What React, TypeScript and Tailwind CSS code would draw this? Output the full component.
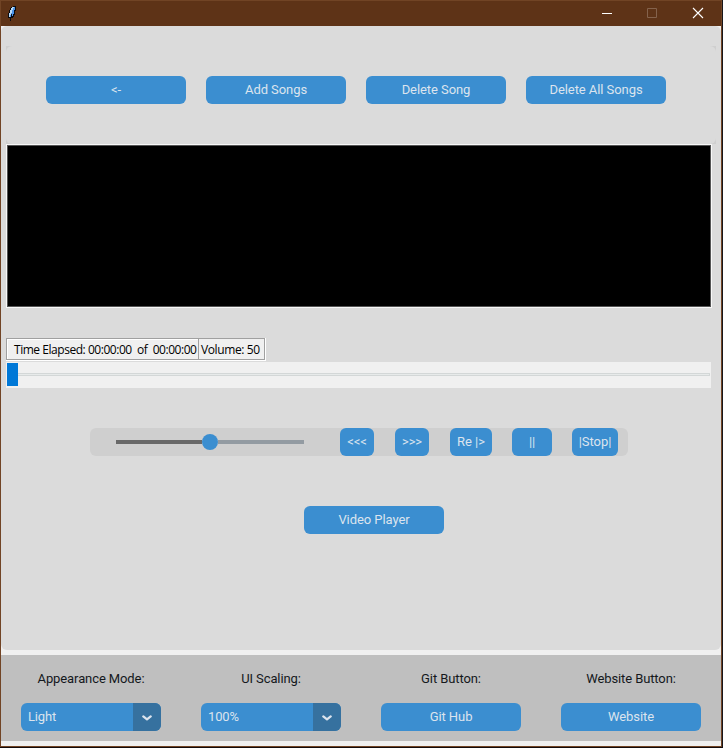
import React from "react";

function Btn({ children, className = "w-[140px]" }: { children: React.ReactNode; className?: string }) {
  return (
    <button
      className={`flex h-7 shrink-0 items-center justify-center whitespace-pre rounded-[6px] bg-[#3b8ed0] pb-[2px] text-[13px] leading-none tracking-[-0.07px] text-[#dce4ee] ${className}`}
    >
      {children}
    </button>
  );
}

function Select({ value }: { value: string }) {
  return (
    <button className="flex h-7 w-[140px] overflow-hidden rounded-[6px] bg-[#3b8ed0] text-[13px] tracking-[-0.15px] text-[#dce4ee]">
      <span className="flex h-7 w-28 items-center pl-[7px]">{value}</span>
      <span className="flex h-7 w-7 items-center justify-center bg-[#36719f]">
        <svg width="10" height="6" viewBox="0 0 10 6" className="mt-px" fill="none" stroke="#dce4ee" strokeWidth="2.2" strokeLinecap="round" strokeLinejoin="round">
          <path d="M1.3 1.4 5 4.4 8.7 1.4" />
        </svg>
      </span>
    </button>
  );
}

function Field({ label, children }: { label: string; children: React.ReactNode }) {
  return (
    <div className="flex w-[180px] flex-col items-center">
      <div className="mb-[10px] mt-[10px] flex h-7 items-center text-[13px] tracking-[-0.1px] text-[#14181c]">{label}</div>
      {children}
    </div>
  );
}

function Feather() {
  return (
    <svg width="8" height="16" viewBox="0 0 8 16" shapeRendering="crispEdges">
      <path d="M5 0h3v5H7v4H6v2H5v1H3v3H2v-3H0V7h1V4h1V2h1V1h2z" fill="#0a0b10" />
      <path d="M4 1h3v3H6v4H5v2H3v1H1V7h1V4h1V2h1z" fill="#4b95ea" />
      <path d="M4 1h2v1H5v2H4v3H3v2H2v2H1V7h1V4h1V2h1z" fill="#b9dbf8" />
      <path d="M3 8h1v2H3z" fill="#10141e" />
    </svg>
  );
}

export default function App() {
  return (
    <div className="flex h-[748px] w-[723px] flex-col border-b border-r border-b-[#120b0b] border-r-[#17171c] font-['Roboto',sans-serif]">
      <div className="flex h-[747px] w-[722px] flex-col border border-[#714425] bg-[#f0f0f0]">
        <header className="flex h-[25px] shrink-0 items-center bg-[#5e3317] pl-[7px] pr-[17px]">
          <Feather />
          <svg className="ml-auto" width="103" height="13" viewBox="0 0 103 13" fill="none">
            <path d="M1 6.5h10" stroke="#fff" />
            <path d="M46.5 1.5h9v9h-9z" stroke="#84624c" />
            <path d="m92 1 10 10m0-10L92 11" stroke="#fff" strokeWidth="1.1" />
          </svg>
        </header>

        <main className="h-[624px] shrink-0 rounded-[6px] bg-[#dbdbdb] px-[5px] pt-5">
          <div className="w-[710px] bg-[#cfcfcf]">
            <div className="flex h-[98px] gap-5 rounded-[6px] bg-[#dbdbdb] pl-10 pt-[30px]">
              <Btn>&lt;-</Btn>
              <Btn>Add Songs</Btn>
              <Btn>Delete Song</Btn>
              <Btn>Delete All Songs</Btn>
            </div>
          </div>

          <div className="h-[164px] w-[706px] border border-[#f8f8f8] bg-black">
            <div className="h-full w-full border border-[#555]" />
          </div>

          <div className="mt-[30px] flex h-[23px] w-[260px] border-b border-r border-white font-['Open_Sans','Noto_Sans',sans-serif] text-[12px] text-black">
            <div className="flex w-[192px] items-center whitespace-pre border border-[#a0a0a0] border-r-0 bg-[#f0f0f0] pl-[7px] pt-px tracking-[-0.46px] shadow-[inset_1px_1px_0_#fff]">
              {"Time Elapsed: 00:00:00  of  00:00:00"}
            </div>
            <div className="flex flex-1 items-center border border-[#a0a0a0] bg-[#f0f0f0] pl-[2px] pt-px tracking-[-0.38px]">Volume: 50</div>
          </div>

          <div className="mt-px flex h-[26px] w-[705px] items-start bg-[#f0f0f0] px-px pt-px">
            <div className="h-[23px] w-[11px] shrink-0 bg-[#0078d7]" />
            <div className="mt-[10px] h-[3px] flex-1 border-y border-r border-[#d3d7d7] bg-[#e7eaea]" />
          </div>

          <div className="ml-[84px] mt-10 flex h-7 w-[538px] items-center rounded-[6px] bg-[#cfcfcf] pl-[26px]">
            <div className="mr-9 flex w-[188px] items-center">
              <div className="h-1 w-[86px] bg-[#696969]" />
              <div className="h-4 w-4 rounded-full bg-[#3b8ed0]" />
              <div className="h-1 w-[86px] bg-[#939ba2]" />
            </div>
            <Btn className="mr-[21px] w-[34px]">&lt;&lt;&lt;</Btn>
            <Btn className="mr-[21px] w-[34px]">&gt;&gt;&gt;</Btn>
            <Btn className="mr-5 w-[42px]">Re |&gt;</Btn>
            <Btn className="mr-5 w-10">||</Btn>
            <Btn className="w-[46px]">|Stop|</Btn>
          </div>

          <div className="mt-[50px] flex pl-[298px]">
            <Btn>Video Player</Btn>
          </div>
        </main>

        <footer className="mt-[5px] flex h-[86px] shrink-0 bg-[#bfbfbf]">
          <Field label="Appearance Mode:"><Select value="Light" /></Field>
          <Field label="UI Scaling:"><Select value="100%" /></Field>
          <Field label="Git Button:"><Btn>Git Hub</Btn></Field>
          <Field label="Website Button:"><Btn>Website</Btn></Field>
        </footer>
      </div>
    </div>
  );
}
